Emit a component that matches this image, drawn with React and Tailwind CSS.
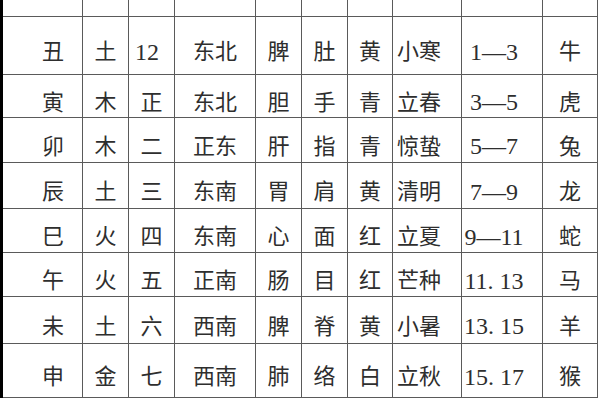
import React from "react";

const rows = [
  ["丑", "土", "12", "东北", "脾", "肚", "黄", "小寒", "1—3", "牛"],
  ["寅", "木", "正", "东北", "胆", "手", "青", "立春", "3—5", "虎"],
  ["卯", "木", "二", "正东", "肝", "指", "青", "惊蛰", "5—7", "兔"],
  ["辰", "土", "三", "东南", "胃", "肩", "黄", "清明", "7—9", "龙"],
  ["巳", "火", "四", "东南", "心", "面", "红", "立夏", "9—11", "蛇"],
  ["午", "火", "五", "正南", "肠", "目", "红", "芒种", "11. 13", "马"],
  ["未", "土", "六", "西南", "脾", "脊", "黄", "小暑", "13. 15", "羊"],
  ["申", "金", "七", "西南", "肺", "络", "白", "立秋", "15. 17", "猴"],
];

const cjk = "font-['Noto_Sans_CJK_SC',sans-serif] text-[22px] pt-[7px]";
const num = "font-['Liberation_Serif',serif] text-[24px] pt-[12px]";

const colCls = [
  `justify-end pr-[18px] ${cjk}`,
  `justify-center ${cjk}`,
  `justify-center ${cjk}`,
  `justify-center ${cjk}`,
  `justify-center ${cjk}`,
  `justify-center ${cjk}`,
  `justify-center ${cjk}`,
  `justify-start pl-[4px] ${cjk}`,
  `justify-center pr-[16px] ${num}`,
  `justify-center ${cjk}`,
];

const cell = "flex items-center whitespace-pre border-r border-b border-[#5a5a5a] text-[#2e2e2e] leading-none";

export default function App() {
  return (
    <div className="w-[600px] h-[400px] bg-white overflow-hidden">
      <div className="w-[598px] border-l-[3px] border-black grid grid-cols-[80px_46px_46px_81px_46px_46px_45px_69px_81px_55px] grid-rows-[17px_58px_43px_45px_46px_44px_44px_47px_54px]">
        {Array.from({ length: 10 }).map((_, i) => (
          <div key={"h" + i} className="border-r border-b border-[#5a5a5a]" />
        ))}
        {rows.map((r, ri) =>
          r.map((t, ci) => {
            let cls = colCls[ci];
            if (ri === 0 && ci === 2) cls = `justify-start pl-[6px] ${num}`;
            return (
              <div key={ri + "-" + ci} className={`${cell} ${cls}`}>
                {t}
              </div>
            );
          })
        )}
      </div>
    </div>
  );
}
